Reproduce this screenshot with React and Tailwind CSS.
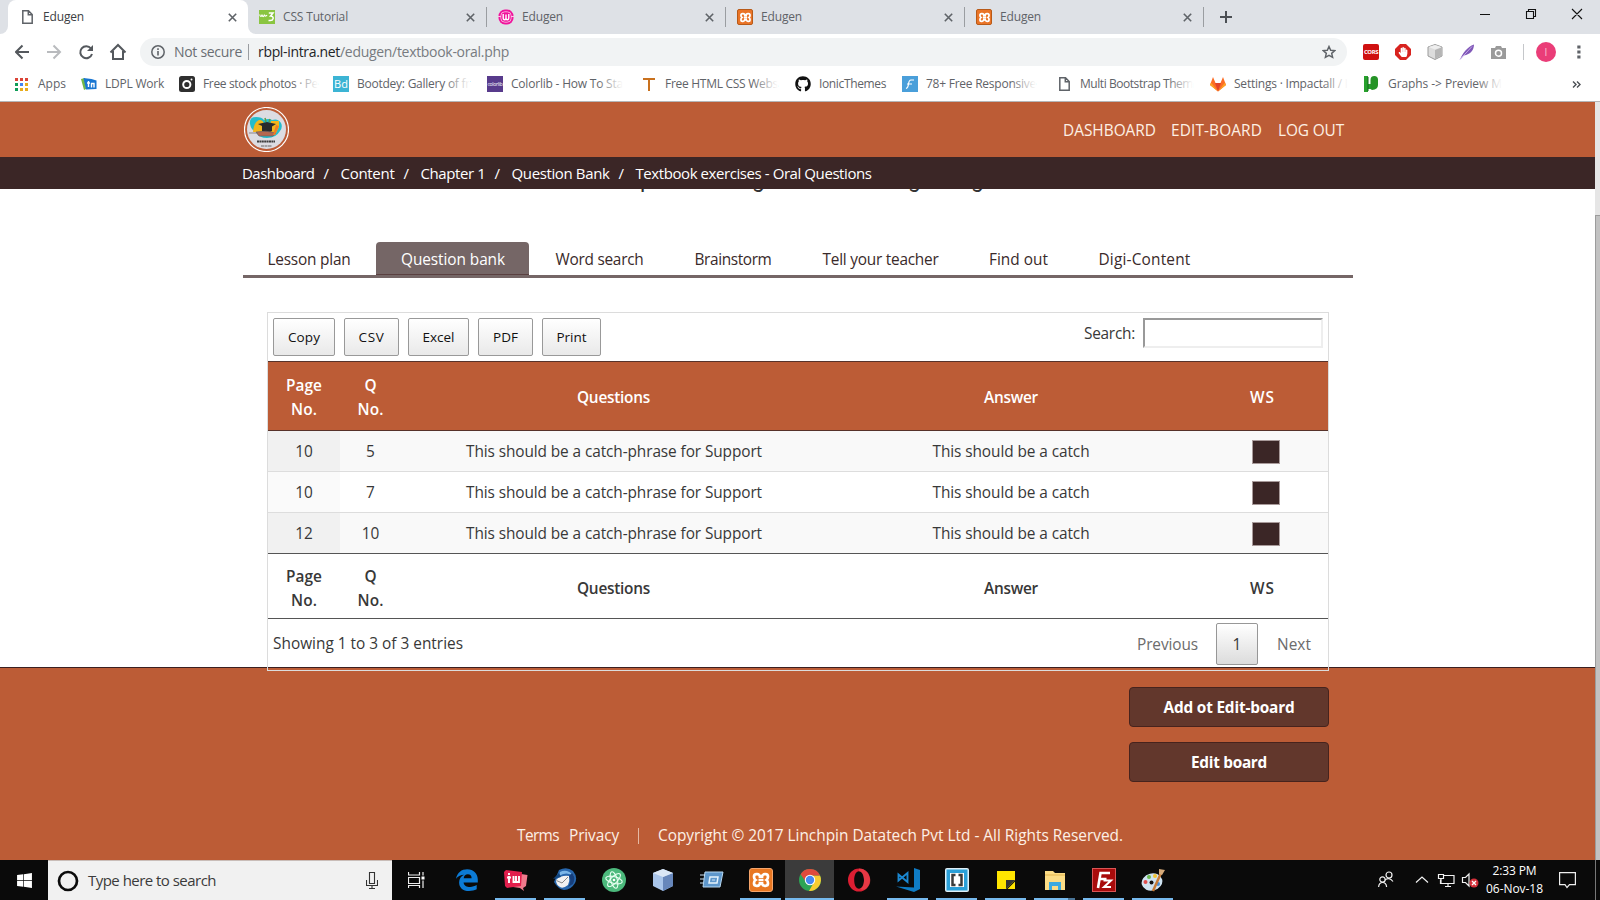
import React, { useLayoutEffect, useRef, useState } from "react";
import { FaGithub, FaWindows, FaHandPaper } from "react-icons/fa";

/* Text spread evenly over a given width */
function Fit({ w, children, className = "" }) {
  const ref = useRef(null);
  const [ls, setLs] = useState(0);
  useLayoutEffect(() => {
    const el = ref.current;
    el.style.letterSpacing = "0px";
    const natural = el.getBoundingClientRect().width;
    const value = (w - natural) / String(children).length;
    el.style.letterSpacing = value + "px";
    setLs(value);
  }, [w, children]);
  return (
    <span className={"inline-block shrink-0 whitespace-nowrap " + className} style={{ width: w }}>
      <span ref={ref} style={{ letterSpacing: ls }}>{children}</span>
    </span>
  );
}

function Svg({ w = 16, h = w, vb, className = "", children }) {
  return (
    <svg width={w} height={h} viewBox={vb || `0 0 ${w} ${h}`} fill="none" className={"shrink-0 " + className}>
      {children}
    </svg>
  );
}

const Doc = ({ className }) => (
  <Svg w={11} h={14} className={className}>
    <path d="M.8.8h5.7l3.7 3.7v8.7H.8zM6.3.8v4h4" stroke="#5f6368" strokeWidth="1.5" />
  </Svg>
);
const Cross = ({ className }) => (
  <Svg w={9} className={className}>
    <path d="M.8.8l7.4 7.4M8.2.8L.8 8.2" stroke="#5f6368" strokeWidth="1.6" />
  </Svg>
);
const W3 = () => (
  <Svg w={16}>
    <rect width="16" height="14" y="1" fill="#8ac541" />
    <path d="M.7 5.500c.4 2.600 1.900 2.600 2.300.2.4 2.600 1.900 2.600 2.400 0C5.800 7.500 7 7.500 8 6" stroke="#fff" strokeWidth="1.200" />
    <path d="M9.800 4h4.200l-2.500 3c4 0 3.600 5.500-2 4.400" stroke="#fff" strokeWidth="1.500" />
  </Svg>
);
const Wamp = () => (
  <Svg w={16}>
    <rect x=".5" y=".5" width="15" height="15" rx="6.500" fill="#f0149c" />
    <rect x="2.800" y="2.800" width="10.400" height="10.400" rx="4" stroke="#fbb6e0" strokeWidth=".9" />
    <path d="M5.200 5v3.800q0 2 1.400 2T8 9V5.500V9q0 1.800 1.400 1.800t1.400-2V5" stroke="#fff" strokeWidth="1.400" />
    <path d="M0 7.500h3M13 7.500h3" stroke="#fbc7e7" />
  </Svg>
);
const Xampp = ({ big }) => (
  <span className={big ? "flex size-6 items-center justify-center rounded-[3px] border border-[#f6a56b] bg-[#e87722]" : "flex size-4 items-center justify-center rounded-[2px] border border-[#b85a18] bg-[#ea7427]"}>
    <Svg w={big ? 20 : 13} vb="0 0 20 20">
      <path d="M9 8V7a2.800 2.800 0 0 0-2.800-2.800H5.500A2.500 2.500 0 0 0 3 6.700Q3 9 4.500 10 3 11 3 13.300a2.500 2.500 0 0 0 2.500 2.500h.7A2.800 2.800 0 0 0 9 13v-1M11 8V7a2.800 2.800 0 0 1 2.800-2.800h.7A2.500 2.500 0 0 1 17 6.700Q17 9 15.500 10q1.500 1 1.500 3.300a2.500 2.500 0 0 1-2.500 2.500h-.7A2.800 2.800 0 0 1 11 13v-1M7.500 10h5" stroke="#fff" strokeWidth="2.700" />
    </Svg>
  </span>
);

const tabs = [
  { icon: <W3 />, label: "CSS Tutorial", w: 65 },
  { icon: <Wamp />, label: "Edugen", w: 41 },
  { icon: <Xampp />, label: "Edugen", w: 41 },
  { icon: <Xampp />, label: "Edugen", w: 41 },
];

function TabStrip() {
  return (
    <div className="flex h-[34px] bg-[#dee1e6] text-[12px] text-[#5f6368]">
      <div className="flex w-2 items-end bg-white"><div className="h-full w-2 rounded-br-[8px] bg-[#dee1e6]" /></div>
      <div className="flex w-[240px] items-center rounded-t-[8px] bg-white pl-[14px] text-[#3c4043]">
        <Doc />
        <Fit w={41} className="ml-[10px]">Edugen</Fit>
        <Cross className="ml-[144px]" />
      </div>
      <div className="flex bg-white">
        <div className="flex w-[239px] items-center rounded-bl-[8px] bg-[#dee1e6] pl-[11px]">
          {tabs[0].icon}
          <Fit w={65} className="ml-2">CSS Tutorial</Fit>
          <Cross className="ml-auto mr-[11px]" />
          <div className="h-5 w-px bg-[#9a9da1]" />
        </div>
      </div>
      {tabs.slice(1).map((t, i) => (
        <div key={i} className="flex w-[239px] items-center pl-[11px]">
          {t.icon}
          <Fit w={t.w} className="ml-2">{t.label}</Fit>
          <Cross className="ml-auto mr-[11px]" />
          <div className="h-5 w-px bg-[#9a9da1]" />
        </div>
      ))}
      <Svg w={12} className="ml-4 self-center">
        <path d="M6 0v12M0 6h12" stroke="#4b4f54" strokeWidth="2" />
      </Svg>
      <Svg w={104} h={12} className="ml-auto mr-[17px] mt-[8px]">
        <path d="M1 6.500h10M47.500 3.500h7v7h-7zM49.500 3.500v-2h7v7h-2M93 1l10 10M103 1L93 11" stroke="#111" strokeWidth="1.100" />
      </Svg>
    </div>
  );
}

function AddressBar() {
  return (
    <div className="flex h-9 items-center bg-white text-[14px]">
      <Svg w={112} h={18} className="ml-[15px]">
        <path d="M14 9H1.500M7.500 2.500L1 9l6.500 6.500" stroke="#54585d" strokeWidth="2" />
        <path d="M32 9h12.500M38.500 2.500L45 9l-6.500 6.500" stroke="#b9bbbe" strokeWidth="2" />
        <path d="M76 5.500A6 6 0 1 0 77 11" stroke="#54585d" strokeWidth="2" />
        <path d="M78 2v6h-6z" fill="#54585d" />
        <path d="M95.500 9.500L103 2l7.500 7.500M98 8v8h10V8" stroke="#54585d" strokeWidth="2" />
      </Svg>
      <div className="ml-[13px] flex h-7 w-[1207px] items-center rounded-full bg-[#f1f3f4] pl-[11px]">
        <Svg w={14}>
          <circle cx="7" cy="7" r="6.200" stroke="#5f6368" strokeWidth="1.500" />
          <path d="M7 6v4.500M7 3.300v1.600" stroke="#5f6368" strokeWidth="1.600" />
        </Svg>
        <Fit w={68} className="ml-[9px] text-[#6a6e73]">Not secure</Fit>
        <div className="ml-[6px] h-4 w-px bg-[#9a9da1]" />
        <Fit w={82} className="ml-[9px] text-[#222427]">rbpl-intra.net</Fit>
        <Fit w={169} className="text-[#777b80]">/edugen/textbook-oral.php</Fit>
        <Svg w={14} vb="0 0 24 24" className="ml-auto mr-[11px]">
          <path d="M12 2.500l2.900 6.400 7 .7-5.300 4.700 1.600 6.900L12 17.600l-6.200 3.600 1.600-6.900L2.100 9.600l7-.7z" stroke="#5f6368" strokeWidth="2.500" />
        </Svg>
      </div>
      <div className="ml-4 flex h-4 w-4 items-center justify-center rounded-[2px] bg-[#cf1010] text-[6px] font-bold text-white">
        <Fit w={14}>CORS</Fit>
      </div>
      <div className="relative ml-4 size-4">
        <Svg w={16}><path d="M5 0h6l5 5v6l-5 5H5l-5-5V5z" fill="#d8231f" /></Svg>
        <FaHandPaper className="absolute left-[3px] top-[3px] size-[10px] text-white" />
      </div>
      <Svg w={16} className="ml-4">
        <path d="M8 .5l7 2.500v9L8 15.500 1 12V3z" fill="#dcdcdc" stroke="#9b9b9b" />
        <path d="M8 6l6.500-2.500v8L8 15z" fill="#b5b5b5" /><path d="M1.500 3L8 1l6.500 2L8 5.500z" fill="#eee" />
      </Svg>
      <Svg w={16} className="ml-4">
        <path d="M1 15.500C4 9 8 3 15 .5c0 5-3 10-10.500 11z" fill="#8058b8" /><path d="M1 15.500L13 2.500" stroke="#c3a8e5" />
      </Svg>
      <Svg w={15} h={13} className="ml-4">
        <path d="M0 2h4l1-2h5l1 2h4v11H0z" fill="#9a9a9a" />
        <circle cx="7.500" cy="7.200" r="3" stroke="#fff" strokeWidth="1.500" />
      </Svg>
      <div className="ml-[17px] h-4 w-px bg-[#c5c7ca]" />
      <div className="ml-3 flex size-5 items-center justify-center rounded-full bg-[#ea3d78] text-[10px] text-[#f9c0d3]">I</div>
      <Svg w={4} h={14} className="ml-[21px]">
        <path d="M.3.5h3.200v3H.3zM.3 5.500h3.200v3H.3zM.3 10.500h3.200v3H.3z" fill="#5f6368" />
      </Svg>
    </div>
  );
}

function Mark({ icon, gap, textGap = 8, label, w, fade }) {
  return (
    <div className="flex shrink-0 items-center" style={{ marginLeft: gap }}>
      {icon}
      <span className="relative flex" style={{ marginLeft: textGap }}>
        <Fit w={w}>{label}</Fit>
        {fade && <span className="absolute inset-y-0 right-0 w-[26px] bg-gradient-to-r from-white/0 to-white" />}
      </span>
    </div>
  );
}

function Bookmarks() {
  return (
    <div className="flex h-[32px] items-center border-b border-[#b5b6b8] bg-white pb-[3px] text-[12px] text-[#5f6368]">
      <Mark gap={15} textGap={10} label="Apps" w={28} icon={
        <Svg w={13}>
          <path d="M0 0h3v3H0zM5 0h3v3H5zM10 0h3v3h-3z" fill="#db4437" />
          <path d="M0 5h3v3H0zM0 10h3v3H0z" fill="#0f9d58" /><path d="M5 5h3v3H5z" fill="#4285f4" />
          <path d="M10 5h3v3h-3zM5 10h3v3H5zM10 10h3v3h-3z" fill="#e8ac1c" />
        </Svg>} />
      <Mark gap={15} label="LDPL Work" w={59} icon={
        <Svg w={16}>
          <path d="M0 3l4-1 1 11-2 1z" fill="#73b84a" /><path d="M2.500 2l8 1 5 1.500v8.500l-10.500.5z" fill="#1976d2" />
          <path d="M7.500 5v6M6 7h3M10.500 11.500V7.500h2.500v4" stroke="#fff" strokeWidth="1.400" />
        </Svg>} />
      <Mark gap={15} label="Free stock photos · Pe" w={115} fade icon={
        <Svg w={16}><rect width="16" height="16" rx="2.500" fill="#2f2f2f" /><circle cx="7.800" cy="8.500" r="3.600" stroke="#fff" strokeWidth="2" /><circle cx="12.500" cy="3.500" r="1" fill="#fff" /></Svg>} />
      <Mark gap={15} label="Bootdey: Gallery of fr" w={113} fade icon={
        <span className="flex size-4 items-center justify-center bg-[#3cb4d4] text-[11px] text-white">Bd</span>} />
      <Mark gap={17} label="Colorlib - How To Sta" w={112} fade icon={
        <span className="flex size-4 items-center justify-center bg-[#583b8c] text-[5px] text-white"><Fit w={15}>colorlib</Fit></span>} />
      <Mark gap={20} textGap={10} label="Free HTML CSS Webs" w={113} fade icon={
        <Svg w={12} h={13}><path d="M0 1h12M6 1v12" stroke="#c9711e" strokeWidth="2" /></Svg>} />
      <Mark gap={17} label="IonicThemes" w={67} icon={<FaGithub className="size-4 text-[#111]" />} />
      <Mark gap={16} label="78+ Free Responsive" w={110} fade icon={
        <Svg w={16}><rect width="16" height="16" fill="#4a9fda" /><path d="M12 4H9Q7 4 6.500 8T4 12.500M5 8h5" stroke="#fff" strokeWidth="1.200" /></Svg>} />
      <Mark gap={23} textGap={10} label="Multi Bootstrap Them" w={113} fade icon={<Doc />} />
      <Mark gap={17} label="Settings · Impactall / I" w={114} fade icon={
        <Svg w={16} h={15}>
          <path d="M0 8L3 0l2.500 6h5L13 0l3 8-8 6.500z" fill="#fc6d26" /><path d="M5 6h6l-3 8.500z" fill="#e24329" /><path d="M0 8l1-2.500 7 9zM16 8l-1-2.500-7 9z" fill="#fca326" />
        </Svg>} />
      <Mark gap={16} textGap={10} label="Graphs -> Preview M" w={114} fade icon={
        <Svg w={14} h={16}><path d="M0 0h4v16H0zM4 13V8h4v5z" fill="#27a02c" /><path d="M6.500 4q0-4 3.800-4T14 4v5q0 4.500-6 5l-1.500-1z" fill="#259326" /><path d="M4 1v14" stroke="#13641a" /></Svg>} />
      <Svg w={9} h={7} className="ml-auto mr-[19px]">
        <path d="M1 .5l3 3-3 3M5 .5l3 3-3 3" stroke="#4b4f54" strokeWidth="1.400" />
      </Svg>
    </div>
  );
}

function SiteHeader() {
  const crumbs = [["Dashboard", 72.5], ["Content", 54], ["Chapter 1", 65], ["Question Bank", 98], ["Textbook exercises - Oral Questions", 236]];
  return (
    <>
      <div className="flex h-[55px] shrink-0 items-center bg-[#bc5c36] pl-[244px] pr-[250px] text-[15.400px] text-[#fdf0e4]">
        <Svg w={45}>
          <circle cx="22.500" cy="22.500" r="22" fill="#bc5c36" stroke="#fff" strokeWidth="1.200" />
          <circle cx="22.500" cy="22.500" r="19.500" fill="#dcdce2" />
          <path d="M6 17q-1-7 6-7 6 0 8 3 5-2 8 0 6-2 9 3 2 4-1 8-4 7-13 7-8 0-11-6-5-2-6-8z" fill="#25bccb" />
          <path d="M9 25q1-10 6-12 5 0 5 5v7zM27 14h8v6l-4 8h-7z" fill="#f3b51b" />
          <path d="M14 17l9-2 9 2-4 2.500V24q-5 3-10 0v-5z" fill="#2b2a2c" />
          <path d="M5 26h9M12 25q10-2 20 1l-3 3H15z" fill="#b5674f" stroke="#6b6265" strokeWidth=".7" /><path d="M29 28l3-10 3 1-4 9z" fill="#ef7d28" />
          <path d="M22 15l-1-4M25 15l1-3" stroke="#5d9d47" strokeWidth="1.500" />
          <path d="M13 34.500h18" stroke="#222" strokeWidth="2" strokeDasharray="2 .4" opacity=".85" /><path d="M17 39h11" stroke="#666" strokeDasharray="3 .5" />
        </Svg>
        <Fit w={93} className="ml-auto pt-[2px]">DASHBOARD</Fit>
        <Fit w={91} className="ml-[15px] pt-[2px]">EDIT-BOARD</Fit>
        <Fit w={66} className="ml-[16px] mr-px pt-[2px]">LOG OUT</Fit>
      </div>
      <div className="flex h-8 shrink-0 items-center bg-[#3b2626] pb-[1px] pl-[242px] text-[15px] text-white">
        {crumbs.map(([t, w], i) => (
          <span key={t} className="flex">
            {i > 0 && <Fit w={8} className="mx-[9px]">/</Fit>}
            <Fit w={w}>{t}</Fit>
          </span>
        ))}
      </div>
    </>
  );
}

function SectionTabs() {
  const items = [["Word search", 88, 26.5], ["Brainstorm", 77, 51], ["Tell your teacher", 116, 51], ["Find out", 59, 50.5], ["Digi-Content", 92, 50.5]];
  return (
    <div className="ml-[243px] mt-[48px] flex h-[36px] w-[1110px] shrink-0 border-b-[3px] border-[#756666] text-[15.400px] text-[#3a2a2a]">
      <span className="flex items-center pl-[24.500px] pt-[2px]"><Fit w={83}>Lesson plan</Fit></span>
      <span className="ml-[25.500px] flex w-[153px] items-center justify-center rounded-t-[4px] border-b border-[#5a4040] bg-[#756666] pl-px pt-[3px] text-white"><Fit w={104}>Question bank</Fit></span>
      {items.map(([t, w, g]) => (
        <span key={t} className="flex items-center pt-[2px]" style={{ marginLeft: g }}><Fit w={w}>{t}</Fit></span>
      ))}
    </div>
  );
}

const exportButtons = [["Copy", 32, 62], ["CSV", 26, 55], ["Excel", 32, 61], ["PDF", 25, 55], ["Print", 30, 59]];
const grid = "grid grid-cols-[72px_61px_425px_369px_133px] items-center text-center";

function HeadCells() {
  return (
    <>
      <div className="flex flex-col items-center leading-[24px]"><Fit w={36}>Page</Fit><Fit w={26}>No.</Fit></div>
      <div className="flex flex-col items-center leading-[24px]"><span>Q</span><Fit w={26}>No.</Fit></div>
      <div><Fit w={73}>Questions</Fit></div>
      <div className="pl-px"><Fit w={54}>Answer</Fit></div>
      <div className="pl-[2px]"><Fit w={25}>WS</Fit></div>
    </>
  );
}

function DataTable() {
  const rows = [["10", "5"], ["10", "7"], ["12", "10"]];
  return (
    <div className="relative z-10 ml-[267px] mt-[34px] h-[359px] w-[1062px] shrink-0 border border-[#dcdcdc] text-[15.400px] text-[#383838]">
      <div className="flex h-12 items-start pl-[5px] pr-[5px] pt-[5px]">
        <div className="flex gap-[9px] text-[13.500px] text-[#111]">
          {exportButtons.map(([t, w, bw]) => (
            <button key={t} className="flex h-[38px] items-center justify-center rounded-[2px] border border-[#999] bg-gradient-to-b from-white to-[#e9e9e9]" style={{ width: bw }}>
              <Fit w={w}>{t}</Fit>
            </button>
          ))}
        </div>
        <Fit w={51} className="ml-auto mr-2 mt-[6px]">Search:</Fit>
        <div className="h-[30px] w-[180px] border-2 border-[#eee] border-l-[#999] border-t-[#999] bg-white" />
      </div>
      <div className={grid + " h-[70px] border-y border-[#57322a] bg-[#bc5c36] pt-[3px] font-semibold text-white"}>
        <HeadCells />
      </div>
      {rows.map((r, i) => (
        <div key={i} className={grid + (i % 2 ? " bg-white" : " bg-[#f9f9f9]") + (i === 2 ? " border-[#555]" : " border-[#ddd]") + " h-[41px] border-b"}>
          <div className={"flex h-full items-center justify-center pt-[2px] " + (i % 2 ? "bg-[#fafafa]" : "bg-[#f1f1f1]")}>{r[0]}</div>
          <div className="pt-[2px]">{r[1]}</div>
          <div className="pl-px pt-[2px]"><Fit w={296}>This should be a catch-phrase for Support</Fit></div>
          <div className="pl-px pt-[2px]"><Fit w={157}>This should be a catch</Fit></div>
          <div className="flex justify-center pl-[9px] pt-[1px]"><div className="h-6 w-7 border border-[#a89a9a] bg-[#3b2626]" /></div>
        </div>
      ))}
      <div className={grid + " h-[65px] border-b border-[#555] bg-white pt-[6px] font-semibold"}>
        <HeadCells />
      </div>
      <div className="flex h-[48px] items-center bg-white pl-[5px] pt-[2px]">
        <Fit w={190} className="mb-px">Showing 1 to 3 of 3 entries</Fit>
        <Fit w={61} className="ml-auto mr-[18px] pt-[2px] text-[#6c6c6c]">Previous</Fit>
        <div className="mr-[19px] flex size-[42px] shrink-0 items-center justify-center rounded-[2px] border border-[#979797] bg-gradient-to-b from-white to-[#dcdcdc] pt-[2px]">1</div>
        <Fit w={34} className="mr-[17px] pt-[2px] text-[#6c6c6c]">Next</Fit>
      </div>
    </div>
  );
}

function SiteFooter() {
  return (
    <div className="-mt-[4px] h-[193px] shrink-0 border-t border-[#3b2020] bg-[#bc5c36] text-[15.400px] text-white">
      <div className="ml-[1129px] mt-[19px] flex w-[200px] flex-col gap-[15px] font-bold">
        <button className="flex h-10 items-center justify-center rounded-[4px] border border-[#47231d] bg-[#62372c] pt-[2px]"><Fit w={131}>Add ot Edit-board</Fit></button>
        <button className="flex h-10 items-center justify-center rounded-[4px] border border-[#47231d] bg-[#62372c] pt-[2px]"><Fit w={76}>Edit board</Fit></button>
      </div>
      <div className="mt-[44px] flex items-center pl-[517px] text-[#fdf0e6]">
        <Fit w={42}>Terms</Fit>
        <Fit w={50} className="ml-[10px]">Privacy</Fit>
        <div className="ml-[19px] h-4 w-px bg-[#e6b9a4]" />
        <Fit w={465} className="ml-[19px]">Copyright © 2017 Linchpin Datatech Pvt Ltd - All Rights Reserved.</Fit>
      </div>
    </div>
  );
}

const apps = [
  [<Svg w={22}><path d="M0 9.800C1.200 3.600 5.600.3 11.200.3c6.400 0 10.600 4.500 10.600 10.300v2.800H7.600c.2 3.200 3.200 4.500 6.500 4.500 2.400 0 4.600-.7 6.600-1.800v4.200c-2.200 1.100-4.800 1.700-7.600 1.700-6.500 0-10-3.700-10-8.600 0-3.400 1.900-6.100 5-7.600C5.200 6 2 7.200 0 9.800zM7.700 9.200h7.900c0-2.500-1.300-4-3.800-4-2.200 0-3.800 1.600-4.100 4z" fill="#0c7bd6" /></Svg>, 0],
  [<Svg w={24} h={22}><path d="M17 5l6.500 1-1.500 11-3 2 1 3-4-3-7-1z" fill="#f07a8c" /><path d="M0 3l2-2 16 2-1 14-14 2-2-2z" fill="#e21f4d" /><path d="M5 4v2M5 7v7M3 8.500h4M9.500 7v6h2.500V7v6H15V7" stroke="#fff" strokeWidth="1.900" /></Svg>, 1],
  [<Svg w={24}><path d="M6 2q8-4 14 1 5 6 2 12-4 7-11 7-6-1-10-8z" fill="#2766ad" /><path d="M7 4q7-4 14 4-8-5-15 0z" fill="#7bb6e8" /><path d="M3 12q5-5 13-4 1 5-1 9-5 4-8 2-4-2-4-7z" fill="#f2f2f2" /><path d="M3.500 12.500L9 15l6-6" stroke="#888" /><path d="M0 11l6-6 2 4z" fill="#12457e" /><path d="M16 8q3 5-1 11l5-3q3-7-1-11z" fill="#173f7c" /></Svg>, 1],
  [<Svg w={24}><circle cx="12" cy="12" r="12" fill="#4cb97c" /><g stroke="#e9fff2" strokeWidth="1.100"><ellipse cx="12" cy="12" rx="8.500" ry="3.300" transform="rotate(15 12 12)" /><ellipse cx="12" cy="12" rx="8.500" ry="3.300" transform="rotate(75 12 12)" /><ellipse cx="12" cy="12" rx="8.500" ry="3.300" transform="rotate(135 12 12)" /></g><circle cx="12" cy="12" r="1.300" fill="#fff" /></Svg>, 0],
  [<Svg w={22} h={24}><path d="M11 1l10 4v13l-10 5-10-5V5z" fill="#a9c5ea" /><path d="M11 9l10-4v13l-10 5z" fill="#6787bb" /><path d="M1 5l10-4 10 4-10 4z" fill="#dbe7f6" /></Svg>, 0],
  [<Svg w={24} h={18}><path d="M5 1h18l-3 15H3z" fill="#5e97cb" stroke="#b6d8f2" /><path d="M10 6h8l-1 6H9z" stroke="#e6f3fc" strokeWidth="1.500" /><path d="M0 4h5M0 8h4M0 12h3M12 9h3" stroke="#cfe4f5" /></Svg>, 0],
  [<Xampp big />, 1],
  [<Svg w={24} h={24}><circle cx="12" cy="12" r="11" fill="#2da455" /><path d="M12 7.500h10a11 11 0 0 1-11 15.400l5-8.700z" fill="#f8cc32" /><path d="M2.600 6.200l5.500 8L12 7.500h10A11 11 0 0 0 2.600 6.200z" fill="#df4a3c" /><circle cx="12" cy="12" r="5.200" fill="#fff" /><circle cx="12" cy="12" r="4.200" fill="#4688f1" /></Svg>, 2],
  [<Svg w={24}><path fillRule="evenodd" d="M12 .5a11 11.500 0 1 1 0 23 11 11.500 0 0 1 0-23zm0 2.700c-3 0-4.800 4-4.800 8.800s1.800 8.800 4.800 8.800 5-4 5-8.800-2-8.800-5-8.800z" fill="#dc1e32" /><path d="M12 .5a11 11.500 0 0 1 7 20.500q-4 1.500-6-.3c2.500-1 4-4.400 4-8.700s-2-8.800-5-8.800z" fill="#f04a50" opacity=".6" /></Svg>, 0],
  [<Svg w={24}><path d="M18 0l6 2v19l-6 3L0 18.500l18 .9z" fill="#0f7cc5" /><path d="M2.500 6.500l9 7.500V5L2.500 12.500z" stroke="#1b88d2" strokeWidth="1.900" /></Svg>, 1],
  [<Svg w={24}><rect width="24" height="24" rx="2" fill="#dff0f9" /><rect x="1.500" y="1.500" width="21" height="21" fill="#2a9fd8" /><path d="M5 5h14v14H5z" fill="#fff" /><path d="M10.500 7H7.500v10h3M13.500 7h3v10h-3" stroke="#3b3b3b" strokeWidth="2.500" /></Svg>, 1],
  [<Svg w={18}><path d="M0 0h18v9l-9 9H0z" fill="#ffe500" /><path d="M9 18V9h9z" fill="#333" /><path d="M10.500 18L18 10.500V18z" fill="#ffe500" /></Svg>, 1],
  [<Svg w={22} h={20}><path d="M1 1h8l2 2h10v17H1z" fill="#fbdc85" /><path d="M1 5h20" stroke="#e3b54e" /><path d="M5 20v-8h12v8h-3v-4H8v4z" fill="#3aa9e0" /></Svg>, 3],
  [<span className="flex size-6 items-center justify-center border border-[#d95555] bg-[#a80b0b]"><Svg w={20}><path d="M4 18L6.500 3H16M5.500 9h7" stroke="#fff" strokeWidth="2.600" /><path d="M9.500 10.500H17L10 17h7" stroke="#fff" strokeWidth="2" /></Svg></span>, 1],
  [<Svg w={24}><ellipse cx="11" cy="14" rx="10.500" ry="8.500" fill="#cfe3f1" transform="rotate(-14 11 14)" /><circle cx="4.500" cy="14" r="2" fill="#de4e4e" /><circle cx="8" cy="9" r="2" fill="#69b84d" /><circle cx="14" cy="8" r="2" fill="#f1c232" /><circle cx="10.500" cy="14.500" r="2" fill="#111" /><circle cx="17" cy="16" r="2" fill="#4a90d9" /><path d="M12 23L20 5" stroke="#c77b37" strokeWidth="2.500" /><path d="M18 1l6 1-3 5-3-1z" fill="#d6aa7a" /></Svg>, 1],
];

function Taskbar() {
  return (
    <div className="flex h-10 shrink-0 items-stretch bg-[#0a0a0a] text-white">
      <div className="flex w-12 items-center justify-center"><FaWindows className="size-[17px]" /></div>
      <div className="flex w-[344px] items-center border-t border-[#c9bdb8] bg-[#f1f1f1] text-[15px] text-[#3b3b3b]">
        <Svg w={22} className="ml-[9px]"><circle cx="11" cy="11" r="9" stroke="#0b0b0b" strokeWidth="2.700" /></Svg>
        <Fit w={128} className="ml-[9px] pb-[2px]">Type here to search</Fit>
        <Svg w={12} h={17} className="ml-auto mr-[14px]"><path d="M3.500.5h5v11h-5zM.5 8v5.500h11V8M6 13.500v3M3 16.500h6" stroke="#333" strokeWidth="1.100" /></Svg>
      </div>
      <Svg w={17} h={16} className="ml-[16px] mr-[17px] self-center">
        <path d="M.5 0v3h11V0M.5 5.500h11v6H.5zM.5 16v-2.500h11V16M15 0v3.500M15 8.500V16" stroke="#eee" strokeWidth="1.200" /><path d="M13.500 4.500h3v3h-3z" fill="#fff" />
      </Svg>
      {apps.map(([icon, state], i) => (
        <div key={i} className={"relative flex w-[49px] shrink-0 items-center justify-center " + (state === 2 ? "bg-[#3b3b3b]" : "")}>
          {icon}
          {state > 0 && <span className={"absolute bottom-0 h-[2px] bg-[#76b9ed] " + (state === 2 ? "inset-x-0" : "inset-x-[4px]")} />}
          {state === 3 && <span className="absolute bottom-0 right-[4px] h-[2px] w-[7px] bg-[#4a7598]" />}
        </div>
      ))}
      <Svg w={101} h={20} className="ml-auto mr-[7px] self-center">
        <g stroke="#f2f2f2" strokeWidth="1.200">
          <circle cx="11" cy="5" r="3" /><path d="M7 10q4-3.500 8 1.500" />
          <circle cx="4.500" cy="9.500" r="2.700" /><path d="M.6 17q.4-4.500 4-4.500t4 4.500" />
          <path d="M38 12.500L44 7l6 5.500M65 5.500h11v8H62.500v-4M67 16.500h6M70 13.500v3M60.500 4.500h5v4h-5zM63 8.500v5" />
          <path d="M84.500 7.500h3l3.500-3.500v12l-3.500-3.500h-3z" />
        </g>
        <circle cx="96" cy="13" r="4.500" fill="#d4303a" /><path d="M94 11l4 4M98 11l-4 4" stroke="#fff" strokeWidth="1.300" />
      </Svg>
      <div className="mr-[16px] flex flex-col items-center justify-center pb-px text-[12px] leading-[18px]"><Fit w={44}>2:33 PM</Fit><Fit w={57}>06-Nov-18</Fit></div>
      <Svg w={17} h={17} className="mr-[19px] self-center"><path d="M.6.600h15.800v12H10.500L8 15.500l-2-2.900H.6z" stroke="#eee" strokeWidth="1.200" /></Svg>
      <div className="mr-1 w-px bg-[#777]" />
    </div>
  );
}

export default function App() {
  return (
    <div className="flex h-[900px] w-[1600px] flex-col overflow-hidden bg-white font-['Open_Sans','Noto_Sans',sans-serif] leading-[20px]">
      <TabStrip />
      <AddressBar />
      <Bookmarks />
      <div className="flex h-[758px]">
        <div className="flex h-[758px] w-[1595px] flex-col">
          <SiteHeader />
          <div className="flex h-[5px] shrink-0 items-end overflow-hidden pl-[640px] font-['Roboto',sans-serif] text-[23px] leading-[28px] text-[#333]">
            <span className="w-[112px]">p</span><span className="w-[156px]">g</span><span className="w-[63px]">g</span><span>g</span>
          </div>
          <SectionTabs />
          <DataTable />
          <SiteFooter />
        </div>
        <div className="flex w-[5px] flex-col bg-[#e6e6e6]">
          <div className="mt-[113px] flex-1 border-l border-t border-[#9c9c9c] bg-[#c2c2c2]" />
        </div>
      </div>
      <Taskbar />
    </div>
  );
}
